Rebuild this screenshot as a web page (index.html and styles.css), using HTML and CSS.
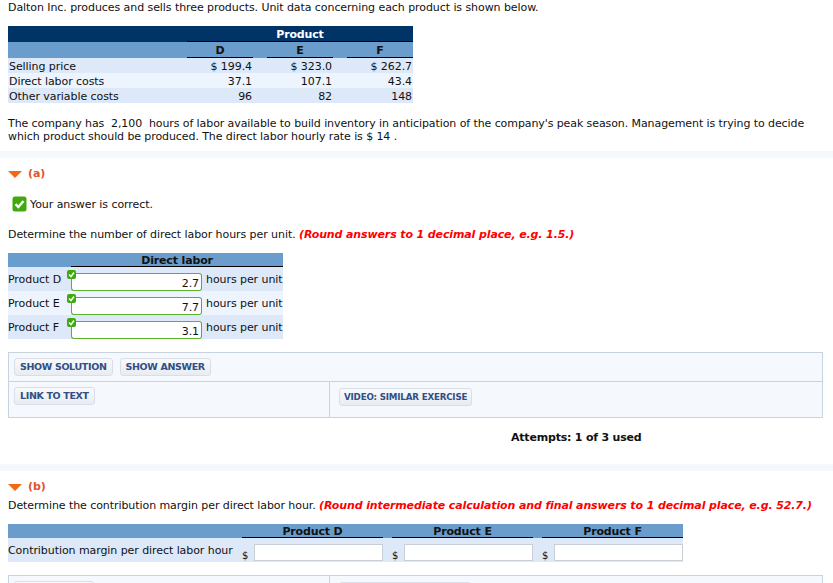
FILE: index.html
```html
<!DOCTYPE html>
<html lang="en">
<head>
<meta charset="utf-8">
<title>Dalton Inc.</title>
<link rel="stylesheet" href="styles.css">
</head>
<body>
<section class="intro">
  <p class="line-first">Dalton Inc. produces and sells three products. Unit data concerning each product is shown below.</p>
  <div class="data-table">
    <div class="dt-top"><span class="dt-product">Product</span></div>
    <div class="dt-head"><span></span><b>D</b><b>E</b><b>F</b></div>
    <div class="dt-row"><span>Selling price</span><span>$ 199.4</span><span>$ 323.0</span><span>$ 262.7</span></div>
    <div class="dt-row alt"><span>Direct labor costs</span><span>37.1</span><span>107.1</span><span>43.4</span></div>
    <div class="dt-row"><span>Other variable costs</span><span>96</span><span>82</span><span>148</span></div>
  </div>
  <p class="para">The company has &nbsp;2,100 &nbsp;hours of labor available to build inventory in anticipation of the company's peak season. Management is trying to decide which product should be produced. The direct labor hourly rate is $ 14 .</p>
</section>
<div class="strip"></div>
<section class="part part-a">
  <h2 class="part-title"><span class="tri"></span>(a)</h2>
  <div class="correct">
    <svg class="ok" width="15" height="16" viewBox="0 0 15 16"><rect x="0.5" y="0.5" width="14" height="15" rx="2.5" fill="#3fa90e"/><path d="M3.5 8.2l2.8 2.8 5.2-6" fill="none" stroke="#fff" stroke-width="2.4"/></svg>
    <span>Your answer is correct.</span>
  </div>
  <p class="prompt">Determine the number of direct labor hours per unit. <em>(Round answers to 1 decimal place, e.g. 1.5.)</em></p>
  <div class="labor">
    <div class="labor-head"><span></span><b>Direct labor</b></div>
    <div class="labor-row"><span class="lname">Product D</span><span class="field"><svg class="tick" width="9" height="9" viewBox="0 0 9 9"><rect width="9" height="9" rx="2" fill="#3fa90e"/><path d="M2 4.5l2 2 3-4" fill="none" stroke="#fff" stroke-width="1.5"/></svg><span class="val">2.7</span></span><span class="unit">hours per unit</span></div>
    <div class="labor-row alt"><span class="lname">Product E</span><span class="field"><svg class="tick" width="9" height="9" viewBox="0 0 9 9"><rect width="9" height="9" rx="2" fill="#3fa90e"/><path d="M2 4.5l2 2 3-4" fill="none" stroke="#fff" stroke-width="1.5"/></svg><span class="val">7.7</span></span><span class="unit">hours per unit</span></div>
    <div class="labor-row"><span class="lname">Product F</span><span class="field"><svg class="tick" width="9" height="9" viewBox="0 0 9 9"><rect width="9" height="9" rx="2" fill="#3fa90e"/><path d="M2 4.5l2 2 3-4" fill="none" stroke="#fff" stroke-width="1.5"/></svg><span class="val">3.1</span></span><span class="unit">hours per unit</span></div>
  </div>
  <div class="tools">
    <div class="tools-top"><a class="btn">SHOW SOLUTION</a><a class="btn">SHOW ANSWER</a></div>
    <div class="tools-bottom">
      <div class="tools-left"><a class="btn">LINK TO TEXT</a></div>
      <div class="tools-right"><a class="btn small">VIDEO: SIMILAR EXERCISE</a></div>
    </div>
  </div>
  <p class="attempts">Attempts: 1 of 3 used</p>
</section>
<div class="strip"></div>
<section class="part part-b">
  <h2 class="part-title"><span class="tri"></span>(b)</h2>
  <p class="prompt-b">Determine the contribution margin per direct labor hour. <em>(Round intermediate calculation and final answers to 1 decimal place, e.g. 52.7.)</em></p>
  <div class="cm">
    <div class="cm-head"><span></span><b>Product D</b><i></i><b>Product E</b><i></i><b>Product F</b></div>
    <div class="cm-row"><span class="cm-label">Contribution margin per direct labor hour</span><span class="cm-d">$</span><span class="cm-in"></span><span class="cm-d">$</span><span class="cm-in"></span><span class="cm-d">$</span><span class="cm-in"></span></div>
  </div>
  <div class="tools tools-next">
    <div class="tools-bottom">
      <div class="tools-left"><span class="stub stub-left"></span></div>
      <div class="tools-right"><span class="stub stub-right"></span></div>
    </div>
  </div>
</section>
</body>
</html>
```
FILE: styles.css
```css
html, body { margin: 0; padding: 0; }
body {
  font-family: "DejaVu Sans", Verdana, sans-serif;
  font-size: 11px;
  line-height: 13px;
  letter-spacing: -0.07px;
  color: #111;
  background: #fff;
  height: 583px;
  overflow: hidden;
}
p { margin: 0; }
b { letter-spacing: -0.15px; }
.intro { padding: 1px 8px 0; height: 151px; box-sizing: border-box; }
.line-first { height: 25px; }
.para { letter-spacing: -0.09px; }
.data-table { width: 405px; }
.dt-top { height: 16px; background: #003366; padding-left: 179px; }
.dt-product {
  display: block; height: 15px; border-bottom: 1px solid #000;
  color: #fff; font-weight: bold; letter-spacing: -0.15px; text-align: center; line-height: 17px;
}
.dt-head, .dt-row { display: grid; grid-template-columns: 165px 66px 66px 66px; column-gap: 14px; }
.dt-head { height: 16px; background: #6a9dcb; }
.dt-head b { text-align: center; border-bottom: 1px solid #000; height: 15px; line-height: 17px; color: #111; }
.dt-row { height: 15px; background: #dde8f9; line-height: 17px; }
.dt-row.alt { background: #edf4fd; }
.dt-row span { text-align: right; padding-right: 1px; }
.dt-row span:first-child { text-align: left; padding-left: 1px; }
.para { margin-top: 14px; width: 805px; }
.strip { height: 7px; background: #f5f8fc; }
.part { padding: 0 8px; }
.part-a { height: 306px; box-sizing: border-box; padding-top: 9px; }
.part-title {
  margin: 0; font-size: 11px; line-height: 14px; font-weight: bold; color: #e2532b;
  display: flex; align-items: center; gap: 6px;
}
.tri {
  width: 0; height: 0; border-left: 7px solid transparent; border-right: 7px solid transparent;
  border-top: 7px solid #f26a14;
}
.correct { display: flex; align-items: center; gap: 3px; margin: 15px 0 0 4px; height: 16px; }
.ok { display: block; }
.prompt { margin-top: 16px; }
em { font-style: italic; font-weight: bold; color: #f00; letter-spacing: -0.12px; }
.labor { margin-top: 12px; width: 275px; }
.labor-head { display: grid; grid-template-columns: 63px 212px; height: 14px; background: #6a9dcb; }
.labor-head b { border-bottom: 1px solid #000; height: 13px; line-height: 16px; text-align: center; }
.labor-row { display: flex; height: 24px; background: #dde8f9; align-items: flex-start; }
.labor-row.alt { background: #edf4fd; }
.lname { width: 63px; line-height: 26px; flex: none; }
.field {
  position: relative; width: 131px; height: 18px; margin-top: 6px; flex: none; box-sizing: border-box;
  background: #fff; border: 1px solid #5bb32e; border-right-color: #7d8a76;
  border-radius: 3px; text-align: right; padding: 3px 2px 0 0;
}
.tick { position: absolute; left: -5px; top: -4px; display: block; }
.val { display: block; }
.unit { margin-left: 4px; line-height: 26px; white-space: nowrap; }
.tools { margin-top: 13px; width: 815px; box-sizing: border-box; border: 1px solid #c8d3e2; background: #f5f8fc; }
.tools-top { height: 29px; padding: 5px 5px 0; box-sizing: border-box; display: flex; gap: 7px; border-bottom: 1px solid #c8d3e2; align-items: flex-start; }
.tools-bottom { display: flex; height: 35px; }
.tools-left { width: 321px; height: 35px; padding: 5px; box-sizing: border-box; border-right: 1px solid #c8d3e2; }
.tools-right { padding: 6px 9px; }
.btn, .stub {
  display: inline-block; height: 18px; line-height: 15px; box-sizing: border-box; padding: 0 5px;
  font-size: 9.5px; font-weight: bold; letter-spacing: -0.35px; color: #2f4f86; white-space: nowrap;
  background: linear-gradient(#f8f9fb, #e8ecf2); border: 1px solid #d9dfe8; border-radius: 3px;
}
.btn.small { font-size: 8.7px; letter-spacing: -0.18px; padding: 0 4px; line-height: 17px; }
.stub-left { width: 80px; }
.stub-right { width: 132px; }
.attempts { margin: 13px 0 0 503px; font-weight: bold; letter-spacing: -0.2px; }
.part-b { padding-top: 9px; }
.prompt-b { margin-top: 5px; }
.cm { margin-top: 12px; width: 675px; }
.cm-head { display: grid; grid-template-columns: 234px 141px 9px 141px 9px 141px; height: 14px; background: #6a9dcb; }
.cm-head b { text-align: center; border-bottom: 1px solid #000; height: 13px; line-height: 16px; }
.cm-row { display: grid; grid-template-columns: 234px 12px 129px 21px 129px 21px 129px; height: 24px; background: #dde8f9; }
.cm-label { line-height: 26px; }
.cm-d { justify-self: end; width: 12px; line-height: 15px; padding-top: 10px; font-size: 10px; }
.cm-in { height: 17px; margin-top: 6px; box-sizing: border-box; background: #fff; border: 1px solid #c9cfd6; }
```
